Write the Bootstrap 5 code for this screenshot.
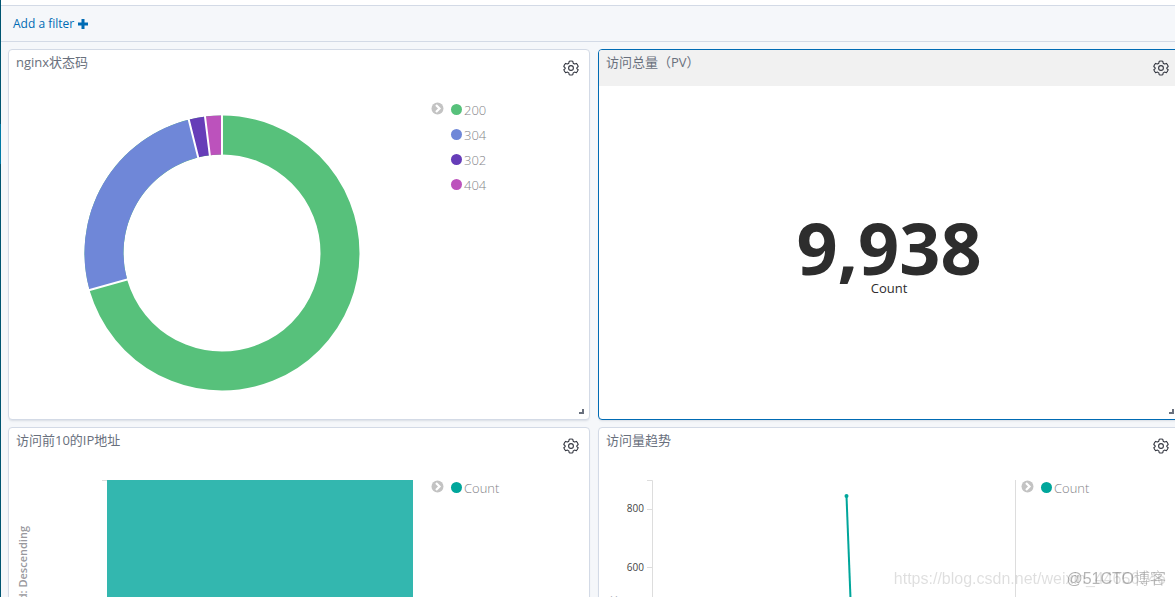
<!DOCTYPE html>
<html lang="zh-CN">
<head>
<meta charset="utf-8">
<meta name="viewport" content="width=device-width, initial-scale=1">
<title>nginx dashboard</title>
<link rel="stylesheet" href="https://cdn.jsdelivr.net/npm/bootstrap@5.3.0/dist/css/bootstrap.min.css">
<style>
  body { font-family: "Open Sans", "Noto Sans CJK SC", sans-serif; font-size: 13px; line-height: 20px; color: #2d2d2d; background: #f5f7fa; }
  main { min-width: 0; }
  .side-nav { width: 1px; background: #005571; padding-top: 124px; }
  .side-active { height: 40px; background: #0079a5; }
  .query-bar { height: 6px; border-bottom: 1px solid #d3dae6; }
  .filter-bar { height: 36px; padding: 0 12px; border-bottom: 1px solid #d3dae6; }
  .filter-bar a { font-size: 12px; color: #006bb4; gap: 4px; }
  /* the grid is slightly wider than the viewport; the last column runs under the scroll area */
  .dash-grid { display: grid; grid-template-columns: 1fr 1fr; gap: 7px 8px; margin: 7px -5px 0 7px; grid-auto-rows: 371px; }
  .panel { position: relative; min-width: 0; background: #fff; border: 1px solid #d3dae6; border-radius: 4px; box-shadow: 0 2px 2px -1px rgba(152,162,179,.3); overflow: hidden; }
  .panel.focused { border-color: #006bb4; }
  .panel-head { height: 36px; padding: 2px 10px 0 7px; }
  .focused .panel-head { background: #f1f1f1; }
  .panel-title { font-size: 13px; font-weight: 400; line-height: 20px; color: #69707d; margin: 0; }
  .gear { width: 16px; height: 16px; margin-top: 8px; color: #343741; }
  .resize { position: absolute; right: 5px; bottom: 5px; width: 5px; height: 5px; border: solid #69707d; border-width: 0 2px 2px 0; }
  .toggle { width: 13px; height: 13px; }
  .legend { gap: 7px; padding: 16px 0 0 7px; }
  .legend ul { margin-top: -5px; }
  .legend li { height: 25px; line-height: 20px; color: #848488; font-weight: 300; }
  .dot { width: 11px; height: 11px; border-radius: 50%; margin-right: 2px; }
  .c200 { background: #57c17b; } .c304 { background: #6f87d8; } .c302 { background: #663db8; } .c404 { background: #bc52bc; } .count { background: #00a69b; }
  .plot { width: 415px; flex: none; }
  .donut { margin: 29px 0 0 75px; }
  .metric { height: 333px; padding-top: 8px; }
  .metric-value { font-size: 72px; line-height: 62px; font-weight: 700; }
  .axis { stroke: #ddd; fill: none; }
  .tick-text { font-size: 10px; fill: #444; }
  .axis-title { font-size: 11px; font-weight: 600; fill: #98989d; }
  .watermark { position: fixed; right: 9px; bottom: 6px; pointer-events: none; white-space: nowrap; line-height: 24px; }
  .mark-url { position: absolute; right: 0; bottom: 0; font-family: "Liberation Sans", sans-serif; font-size: 16px; color: rgba(0,0,0,.13); }
  .mark-site { position: relative; font-family: "Liberation Sans", "Noto Sans CJK SC", sans-serif; font-size: 16px; font-weight: 300; color: rgba(70,70,70,.4); }
</style>
</head>
<body class="d-flex vh-100 overflow-hidden">
<svg class="d-none">
  <symbol id="gear" viewBox="0 0 16 16"><g fill="none" stroke="currentColor" stroke-width="1.1" stroke-linejoin="round"><path d="M6.2 1.3Q8 .8 9.8 1.3L10.2 3.2L11.5 4L13.4 3.4Q14.7 4.7 15.2 6.5L13.8 7.8V8.6L15.2 9.7Q14.7 11.4 13.4 12.7L11.5 12.1L10.2 12.9L9.8 14.7Q8 15.2 6.2 14.7L5.8 12.9L4.5 12.1L2.6 12.7Q1.3 11.4.8 9.7L2.2 8.6V7.8L.8 6.5Q1.3 4.7 2.6 3.4L4.5 4L5.8 3.2Z"/><circle cx="8" cy="8" r="2.4"/></g></symbol>
  <symbol id="chevron" viewBox="0 0 13 13"><circle cx="6.500" cy="6.500" r="6" fill="#c3c3c3"/><path d="M5 3L8.500 6.500L5 10" fill="none" stroke="#fff" stroke-width="2.200"/></symbol>
</svg>
<nav class="side-nav flex-shrink-0"><div class="side-active"></div></nav>
<main class="flex-grow-1">
  <div class="query-bar bg-white"></div>
  <div class="filter-bar d-flex align-items-center">
    <a href="#" class="text-decoration-none d-flex align-items-center">Add a filter
      <svg width="10" height="10" viewBox="0 0 10 10"><path d="M5 0V10M0 5H10" stroke="#006bb4" stroke-width="3"/></svg></a>
  </div>
  <div class="dash-grid">
    <section class="panel">
      <header class="panel-head d-flex justify-content-between align-items-start"><h2 class="panel-title">nginx状态码</h2><button class="btn p-0 border-0 d-flex" aria-label="Panel options"><svg class="gear"><use href="#gear"/></svg></button></header>
      <div class="d-flex">
        <div class="plot">
          <svg class="donut d-block" width="276" height="276" viewBox="-138 -138 276 276">
            <g fill="none" stroke-width="39">
              <circle r="118" stroke="#57c17b"/>
              <path d="M-113.700 31.700A118 118 0 0 1-28.100-114.600" stroke="#6f87d8"/>
              <path d="M-28.100-114.600A118 118 0 0 1-14.200-117.100" stroke="#663db8"/>
              <path d="M-14.200-117.100A118 118 0 0 1 0-118" stroke="#bc52bc"/>
            </g>
            <path d="M0 0L-135 37.700M0 0L-33.900-136M0 0L-17.200-138M0 0V-139" stroke="#fff" stroke-width="2"/>
          </svg>
        </div>
        <div class="legend d-flex align-items-start">
          <button class="btn p-0 border-0 d-flex" aria-label="Toggle legend"><svg class="toggle"><use href="#chevron"/></svg></button>
          <ul class="list-unstyled mb-0">
            <li class="d-flex align-items-center"><span class="dot c200"></span>200</li>
            <li class="d-flex align-items-center"><span class="dot c304"></span>304</li>
            <li class="d-flex align-items-center"><span class="dot c302"></span>302</li>
            <li class="d-flex align-items-center"><span class="dot c404"></span>404</li>
          </ul>
        </div>
      </div>
      <span class="resize"></span>
    </section>
    <section class="panel focused">
      <header class="panel-head d-flex justify-content-between align-items-start"><h2 class="panel-title">访问总量（PV）</h2><button class="btn p-0 border-0 d-flex" aria-label="Panel options"><svg class="gear"><use href="#gear"/></svg></button></header>
      <div class="metric d-flex flex-column align-items-center justify-content-center">
        <div class="metric-value">9,938</div>
        <div>Count</div>
      </div>
      <span class="resize"></span>
    </section>
    <section class="panel">
      <header class="panel-head d-flex justify-content-between align-items-start"><h2 class="panel-title">访问前10的IP地址</h2><button class="btn p-0 border-0 d-flex" aria-label="Panel options"><svg class="gear"><use href="#gear"/></svg></button></header>
      <div class="d-flex">
        <div class="plot">
          <svg class="d-block" width="415" height="330" viewBox="0 0 415 330">
            <rect x="98" y="16" width="306" height="280" fill="#33b7af"/>
            <path class="axis" d="M93 16.500H98"/>
            <text class="axis-title" transform="translate(18 62) rotate(-90)" text-anchor="end">keyword: Descending</text>
          </svg>
        </div>
        <div class="legend d-flex align-items-start">
          <button class="btn p-0 border-0 d-flex" aria-label="Toggle legend"><svg class="toggle"><use href="#chevron"/></svg></button>
          <ul class="list-unstyled mb-0"><li class="d-flex align-items-center"><span class="dot count"></span>Count</li></ul>
        </div>
      </div>
    </section>
    <section class="panel">
      <header class="panel-head d-flex justify-content-between align-items-start"><h2 class="panel-title">访问量趋势</h2><button class="btn p-0 border-0 d-flex" aria-label="Panel options"><svg class="gear"><use href="#gear"/></svg></button></header>
      <div class="d-flex">
        <div class="plot">
          <svg class="d-block overflow-visible" width="415" height="330" viewBox="0 0 415 330">
            <path class="axis" d="M48 16.500H53.500V290M48 45.500H53M48 103.500H53M416.500 16V290"/>
            <text class="tick-text" x="45" y="48" text-anchor="end">800</text>
            <text class="tick-text" x="45" y="107" text-anchor="end">600</text>
            <path d="M247.500 32L252.500 160" stroke="#00a69b" stroke-width="2" fill="none"/>
            <circle cx="247.500" cy="32" r="2" fill="#00a69b"/>
            <text class="axis-title" transform="translate(18 132) rotate(-90)" text-anchor="end">Count</text>
          </svg>
        </div>
        <div class="legend d-flex align-items-start">
          <button class="btn p-0 border-0 d-flex" aria-label="Toggle legend"><svg class="toggle"><use href="#chevron"/></svg></button>
          <ul class="list-unstyled mb-0"><li class="d-flex align-items-center"><span class="dot count"></span>Count</li></ul>
        </div>
      </div>
    </section>
  </div>
</main>
<div class="watermark"><span class="mark-url">https://blog.csdn.net/weixin_44656146</span><span class="mark-site">@51CTO博客</span></div>
<script src="https://cdn.jsdelivr.net/npm/bootstrap@5.3.0/dist/js/bootstrap.bundle.min.js"></script>
</body>
</html>
